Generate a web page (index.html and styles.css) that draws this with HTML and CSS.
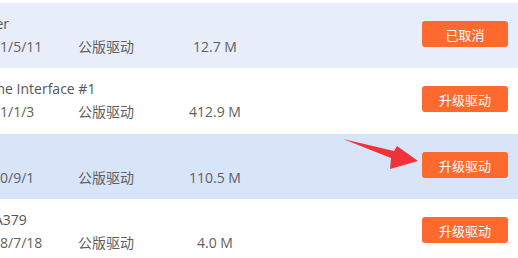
FILE: index.html
```html
<!DOCTYPE html>
<html lang="zh-CN">
<head>
<meta charset="utf-8">
<link rel="stylesheet" href="styles.css">
</head>
<body>
<div class="list">
  <div class="row row-soft">
    <div class="info">
      <div class="name">Driver</div>
      <div class="meta">
        <span class="date">2021/5/11</span>
        <span class="type">公版驱动</span>
        <span class="size">12.7 M</span>
      </div>
    </div>
    <button class="btn">已取消</button>
  </div>
  <div class="row">
    <div class="info">
      <div class="name">Engine Interface #1</div>
      <div class="meta">
        <span class="date">2021/1/3</span>
        <span class="type">公版驱动</span>
        <span class="size">412.9 M</span>
      </div>
    </div>
    <button class="btn">升级驱动</button>
  </div>
  <div class="row row-active">
    <div class="info">
      <div class="name"></div>
      <div class="meta">
        <span class="date">2020/9/1</span>
        <span class="type">公版驱动</span>
        <span class="size">110.5 M</span>
      </div>
    </div>
    <button class="btn">升级驱动</button>
    <svg class="arrow" width="90" height="40" viewBox="0 0 90 40">
      <polygon points="1,0 52,12 55,7 76,22 48,30 49,19" fill="#f2323a"/>
    </svg>
  </div>
  <div class="row">
    <div class="info">
      <div class="name">ALCA379</div>
      <div class="meta">
        <span class="date">2018/7/18</span>
        <span class="type">公版驱动</span>
        <span class="size">4.0 M</span>
      </div>
    </div>
    <button class="btn">升级驱动</button>
  </div>
</div>
</body>
</html>
```
FILE: styles.css
```css
html, body {
  margin: 0;
  padding: 0;
  background: #ffffff;
  overflow: hidden;
}
body {
  font-family: "Open Sans", "Noto Sans CJK SC", sans-serif;
  font-size: 14px;
  color: #5f5f5f;
}
.list {
  padding-top: 3px;
}
.row {
  position: relative;
  height: 66px;
  display: flex;
  align-items: flex-start;
  justify-content: space-between;
  padding-right: 10px;
  background: #ffffff;
}
.row-soft {
  background: #e8eef9;
  height: 65px;
}
.row-active {
  background: #d8e4f8;
  height: 65px;
}
.info {
  margin-left: -24px;
  padding-top: 9px;
  line-height: 23px;
  white-space: nowrap;
}
.name {
  height: 23px;
  color: #555;
  text-indent: -7px;
}
.meta {
  display: flex;
}
.date {
  width: 102px;
}
.type {
  width: 100px;
}
.size {
  width: 74px;
  text-align: center;
}
.btn {
  margin-top: 18px;
  width: 86px;
  height: 26px;
  border: 0;
  border-radius: 3px;
  background: #fe6a2e;
  color: #ffffff;
  font-family: "Noto Sans CJK SC", sans-serif;
  font-size: 13px;
  padding: 0;
}
.arrow {
  position: absolute;
  left: 342px;
  top: 5px;
}
```
